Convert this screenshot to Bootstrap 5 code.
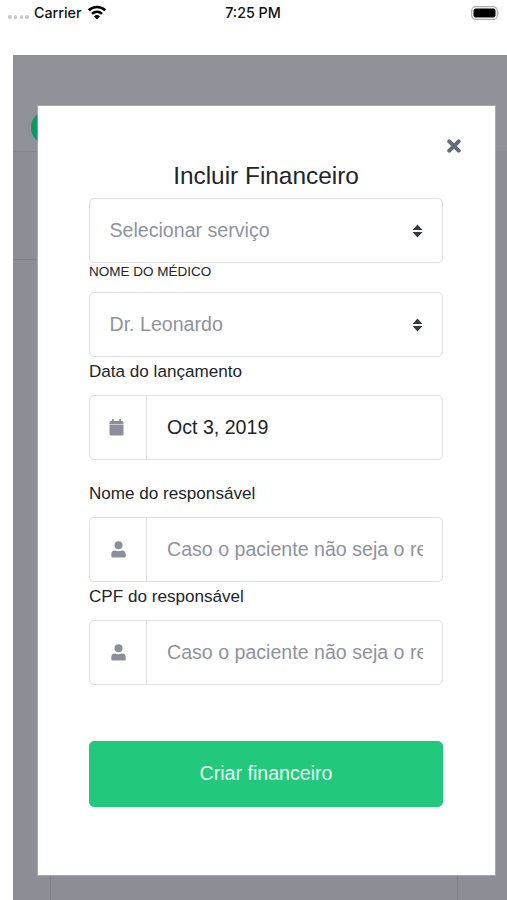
<!DOCTYPE html>
<html lang="pt-BR">
<head>
<meta charset="utf-8">
<meta name="viewport" content="width=device-width, initial-scale=1">
<title>Incluir Financeiro</title>
<link href="https://cdn.jsdelivr.net/npm/bootstrap@5.3.0/dist/css/bootstrap.min.css" rel="stylesheet">
<style>
body { font-family: "Liberation Sans", Arial, sans-serif; background: #fff; color: #212529; height: 900px; overflow: hidden; }
.status-bar { height: 55px; padding: 4px 7px 0 8px; font: 500 14.3px/18px Inter, sans-serif; color: #111; }
.status-bar > div { flex: 1 1 0; height: 18px; }
.status-time { padding-right: 2px; }
.signal { gap: 2.2px; margin: 11px 5px 0 0; }
.signal i { width: 3.6px; height: 3.6px; border-radius: 50%; background: #c9c9c9; }
.wifi { margin: 1px 0 0 5px; }
.app-page { margin-left: 13px; height: 845px; background: #8b8e95; }
.app-header { height: 96px; background: #8e9198; }
.app-logo { width: 35px; height: 35px; margin: 55px 0 0 18px; background: #0b9a62; }
.app-section { height: 109px; margin-right: 30px; border: solid #81848d; border-width: 1px 0; }
.app-table { margin: 0 49px 0 37px; height: 640px; border: solid #7f828a; border-width: 0 1px; }
.sheet { left: 38px; top: 106px; width: 457px; height: 769px; padding: 33px 52px 0 51px; background: #fff; box-shadow: 0 0 0 1px rgba(190,193,197,.55); }
.close-icon { width: 14px; height: 14px; margin: 0 -17.5px 0 0; }
.sheet-title { font-size: 24.4px; line-height: 30px; margin: 8px 0 7px; }
.field { height: 65px; border: 1.5px solid #dddfe1; border-radius: 5px; font-size: 19.6px; line-height: 28px; color: #8e939c; background: #fff; }
.field-select { padding: 0 19px 0 19.5px; }
.field-icon { width: 57px; border-right: 1.5px solid #dddfe1; color: #8b8f9b; }
.field-text { margin: 0 19px 0 20px; white-space: nowrap; overflow: hidden; }
.field > span:not(.field-icon) { padding-bottom: 1px; }
.field-label { font-size: 17.1px; line-height: 24px; }
.label-caps { font-size: 13.5px; line-height: 18px; margin-bottom: 11px; }
.label-date { margin: 3px 0 11px; }
.label-name { margin: 22px 0 11px; }
.label-cpf { margin: 3px 0 11px; }
.btn-create { --bs-btn-color: #e9fff4; --bs-btn-bg: #22c97c; --bs-btn-border-color: #22c97c; height: 66px; margin-top: 56px; font-size: 19.6px; border-radius: 5px; }
</style>
<script src="https://cdn.jsdelivr.net/npm/bootstrap@5.3.0/dist/js/bootstrap.bundle.min.js"></script>
</head>
<body>
<header class="status-bar d-flex align-items-start">
  <div class="d-flex">
    <span class="signal d-flex"><i></i><i></i><i></i><i></i></span>
    <span>Carrier</span>
    <svg class="wifi" width="20" height="15" viewBox="0 0 20 15" fill="none" stroke="#000" stroke-width="2.6"><path d="M1.8 5.300a11.700 11.700 0 0 1 16.400 0M5 8.800a7.100 7.100 0 0 1 10 0"/><path d="M10 14.500 7 11.500a4.300 4.300 0 0 1 6 0z" fill="#000" stroke="none"/></svg>
  </div>
  <div class="status-time text-center">7:25 PM</div>
  <div class="d-flex justify-content-end">
    <svg width="30" height="18" viewBox="0 0 30 18"><rect x="1.7" y="2.700" width="25.600" height="12.600" rx="3.800" fill="#fff" stroke="#aaa" stroke-width="1.200"/><rect x="3.500" y="4.500" width="22" height="9" rx="2" fill="#000"/><path d="M28.500 7q1.500 2 0 4z" fill="#aaa"/></svg>
  </div>
</header>
<main class="app-page">
  <div class="app-header d-flex"><div class="app-logo rounded-circle"></div></div>
  <div class="app-section"></div>
  <div class="app-table"></div>
</main>
<section class="sheet position-absolute d-flex flex-column" role="dialog" aria-labelledby="sheet-title">
  <svg class="close-icon align-self-end flex-shrink-0" viewBox="0 0 14 14" stroke="#626b78" stroke-width="4" stroke-linecap="round"><path d="m2.300 2.300 9.400 9.400M11.700 2.300l-9.400 9.400"/></svg>
  <h1 class="sheet-title fw-normal text-center" id="sheet-title">Incluir Financeiro</h1>
  <div class="field field-select d-flex align-items-center justify-content-between flex-shrink-0">
    <span>Selecionar serviço</span>
    <svg width="11" height="14" viewBox="0 0 11 14" fill="#343a40"><path d="M5.500.5 10.500 6H.5zM.5 8h10L5.500 13.500z"/></svg>
  </div>
  <span class="label-caps">NOME DO MÉDICO</span>
  <div class="field field-select d-flex align-items-center justify-content-between flex-shrink-0">
    <span>Dr. Leonardo</span>
    <svg width="11" height="14" viewBox="0 0 11 14" fill="#343a40"><path d="M5.500.5 10.500 6H.5zM.5 8h10L5.500 13.500z"/></svg>
  </div>
  <span class="field-label label-date">Data do lançamento</span>
  <div class="field d-flex align-items-stretch flex-shrink-0">
    <span class="field-icon d-flex align-items-center justify-content-center flex-shrink-0"><svg class="me-1" width="15" height="17" viewBox="0 0 15 17" fill="currentColor"><path d="M3 0h1.800v2h5.400V0H12v2h1q1.500 0 1.500 1.500V5H.5V3.500Q.5 2 2 2h1z"/><path d="M.5 5h14v1H.5z" opacity=".45"/><path d="M.5 6h14v9q0 1.500-1.500 1.500H2Q.5 16.500.5 15z"/></svg></span>
    <span class="field-text align-self-center text-dark">Oct 3, 2019</span>
  </div>
  <span class="field-label label-name">Nome do responsável</span>
  <div class="field d-flex align-items-stretch flex-shrink-0">
    <span class="field-icon d-flex align-items-center justify-content-center flex-shrink-0"><svg width="15" height="17" viewBox="0 0 15 17" fill="currentColor"><circle cx="7.500" cy="4.300" r="4"/><path d="M4 9.500q3.500 1.500 7 0 3.700 0 3.700 4v1.700q0 1.300-1.300 1.300H1.600Q.3 16.500.3 15.200v-1.700q0-4 3.700-4z"/></svg></span>
    <span class="field-text align-self-center">Caso o paciente não seja o responsável</span>
  </div>
  <span class="field-label label-cpf">CPF do responsável</span>
  <div class="field d-flex align-items-stretch flex-shrink-0">
    <span class="field-icon d-flex align-items-center justify-content-center flex-shrink-0"><svg width="15" height="17" viewBox="0 0 15 17" fill="currentColor"><circle cx="7.500" cy="4.300" r="4"/><path d="M4 9.500q3.500 1.500 7 0 3.700 0 3.700 4v1.700q0 1.300-1.300 1.300H1.600Q.3 16.500.3 15.200v-1.700q0-4 3.700-4z"/></svg></span>
    <span class="field-text align-self-center">Caso o paciente não seja o responsável</span>
  </div>
  <button type="button" class="btn btn-create w-100 flex-shrink-0">Criar financeiro</button>
</section>
</body>
</html>
